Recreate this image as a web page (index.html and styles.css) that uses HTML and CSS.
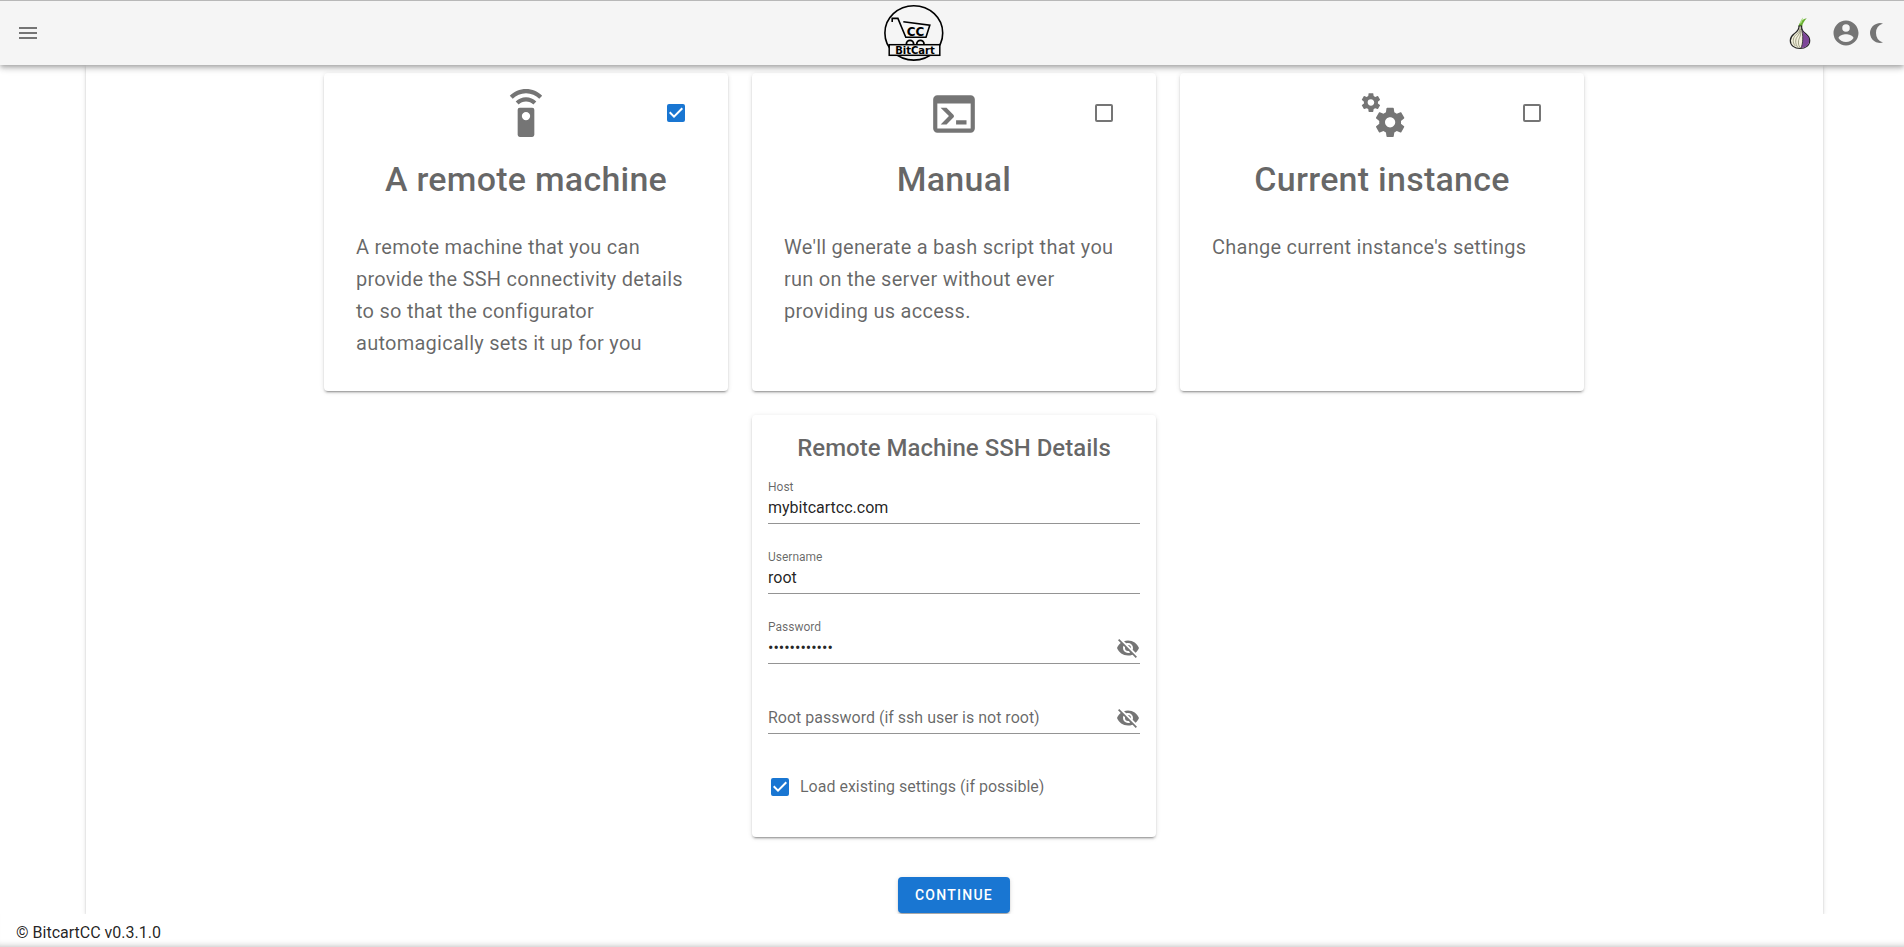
FILE: index.html
```html
<!DOCTYPE html>
<html lang="en">
<head>
<meta charset="utf-8">
<meta name="viewport" content="width=device-width, initial-scale=1">
<title>BitcartCC</title>
<link rel="stylesheet" href="styles.css">
</head>
<body>
<header class="app-bar">
  <button class="icon-button" type="button" aria-label="Menu">
    <svg class="icon" viewBox="0 0 24 24"><path d="M3,6H21V8H3V6M3,11H21V13H3V11M3,16H21V18H3V16Z"/></svg>
  </button>
  <a class="logo" href="#" aria-label="BitCart home">
    <svg width="60" height="60" viewBox="0 0 60 60" fill="none" stroke="#000">
      <ellipse cx="29.8" cy="29.9" rx="28.9" ry="27.2" stroke-width="1.6"/>
      <path d="M8.2 19V15.4H13.9L21.8 34.2H42L45.8 22.2L19.3 18.7" stroke-width="1.6"/>
      <circle cx="26" cy="41" r="3.6" stroke-width="1.8"/>
      <circle cx="36.4" cy="41" r="3.6" stroke-width="1.8"/>
      <rect x="5.2" y="41.7" width="50.6" height="10.6" fill="#f5f5f5" stroke-width="1.5"/>
      <text class="logo-cc" x="31.5" y="32.5" text-anchor="middle">CC</text>
      <text class="logo-name" x="31" y="50.7" text-anchor="middle">BitCart</text>
    </svg>
  </a>
  <nav class="actions">
    <a class="tor" href="#" aria-label="Tor">
      <svg width="24" height="34" viewBox="0 0 24 34">
        <path d="M10.5 10.5C11 7 13.5 3.5 18.8 2.2C16.5 4.5 14.8 7 14 10.5Z" fill="#68b030"/>
        <path d="M11.8 8C12 6 13 3.5 15 1.6C14.6 4 14 6 13.4 7Z" fill="#a6dc7c"/>
        <path d="M11 10C11.3 14 9 15.5 6 18C3.5 20 2.3 22 2.3 24.5C2.3 29.5 6.5 32.5 12 32.5C17.5 32.5 21.7 29.5 21.7 24.5C21.7 22 20.4 20 18 18C15 15.5 13.3 14 13.6 10Z" fill="#f2f0dc" stroke="#222" stroke-width="1.2"/>
        <path d="M13.5 12C14 15 15.5 16.3 18 18.4C20.3 20.3 21.2 22 21.2 24.5C21.2 29 17.5 32 13 32C15.2 28 15.5 19 13.5 12Z" fill="#7d4698"/>
        <path d="M12.2 11C12 17 9 17 6.5 20.5C4.5 23.5 5 28 7.5 30M12.4 13C12 19 8.5 20 7.8 24C7.3 27 8.5 30 10 31.5M12.8 15C13 21 10.5 22 10.4 26C10.3 29 11.5 31 12.3 32" fill="none" stroke="#8a8a70" stroke-width=".8"/>
        <path d="M13.4 12C15.3 19 15.3 28 12.8 32.3" fill="none" stroke="#333" stroke-width=".9"/>
      </svg>
    </a>
    <button class="icon-button" type="button" aria-label="Account">
      <svg class="icon icon-medium" viewBox="0 0 24 24"><path d="M12,19.2C9.5,19.2 7.29,17.92 6,16C6.03,14 10,12.9 12,12.9C14,12.9 17.97,14 18,16C16.71,17.92 14.5,19.2 12,19.2M12,5A3,3 0 0,1 15,8A3,3 0 0,1 12,11A3,3 0 0,1 9,8A3,3 0 0,1 12,5M12,2A10,10 0 0,0 2,12A10,10 0 0,0 12,22A10,10 0 0,0 22,12C22,6.47 17.5,2 12,2Z"/></svg>
    </button>
    <button class="icon-button theme-toggle" type="button" aria-label="Dark theme">
      <svg class="icon" viewBox="0 0 24 24"><path d="M2 12A10 10 0 0 0 15 21.54A10 10 0 0 1 15 2.46A10 10 0 0 0 2 12Z"/></svg>
    </button>
  </nav>
</header>

<main class="main">
  <form class="panel">
    <div class="options">
      <section class="card option">
        <input class="checkbox option-check" type="checkbox" aria-labelledby="opt-remote" checked>
        <svg class="icon icon-large" viewBox="0 0 24 24"><path d="M12,0C8.96,0 6.21,1.23 4.22,3.22L5.63,4.63C7.26,3 9.5,2 12,2C14.5,2 16.74,3 18.36,4.64L19.77,3.23C17.79,1.23 15.04,0 12,0M7.05,6.05L8.46,7.46C9.37,6.56 10.62,6 12,6C13.38,6 14.63,6.56 15.54,7.46L16.95,6.05C15.68,4.78 13.93,4 12,4C10.07,4 8.32,4.78 7.05,6.05M12,15A2,2 0 0,1 10,13A2,2 0 0,1 12,11A2,2 0 0,1 14,13A2,2 0 0,1 12,15M15,9H9A1,1 0 0,0 8,10V22A1,1 0 0,0 9,23H15A1,1 0 0,0 16,22V10A1,1 0 0,0 15,9Z"/></svg>
        <h2 class="option-title" id="opt-remote">A remote machine</h2>
        <p class="option-text">A remote machine that you can provide the SSH connectivity details to so that the configurator automagically sets it up for you</p>
      </section>
      <section class="card option">
        <input class="checkbox option-check" type="checkbox" aria-labelledby="opt-manual">
        <svg class="icon icon-large" viewBox="0 0 24 24"><path d="M20,19V7H4V19H20M20,3A2,2 0 0,1 22,5V19A2,2 0 0,1 20,21H4A2,2 0 0,1 2,19V5C2,3.89 2.9,3 4,3H20M13,17V15H18V17H13M9.58,13L5.57,9H8.4L11.7,12.3C12.09,12.69 12.09,13.33 11.7,13.72L8.42,17H5.59L9.58,13Z"/></svg>
        <h2 class="option-title" id="opt-manual">Manual</h2>
        <p class="option-text">We'll generate a bash script that you run on the server without ever providing us access.</p>
      </section>
      <section class="card option">
        <input class="checkbox option-check" type="checkbox" aria-labelledby="opt-current">
        <svg class="icon icon-large" viewBox="0 0 24 24"><path d="M15.9,18.45C17.25,18.45 18.35,17.35 18.35,16C18.35,14.65 17.25,13.55 15.9,13.55C14.54,13.55 13.45,14.65 13.45,16C13.45,17.35 14.54,18.45 15.9,18.45M21.1,16.68L22.58,17.84C22.71,17.95 22.75,18.13 22.66,18.29L21.26,20.71C21.17,20.86 21,20.92 20.83,20.86L19.09,20.16C18.73,20.44 18.33,20.67 17.91,20.85L17.64,22.7C17.62,22.87 17.47,23 17.3,23H14.5C14.32,23 14.18,22.87 14.15,22.7L13.89,20.85C13.46,20.67 13.07,20.44 12.71,20.16L10.96,20.86C10.81,20.92 10.62,20.86 10.54,20.71L9.14,18.29C9.05,18.13 9.09,17.95 9.22,17.84L10.7,16.68L10.65,16L10.7,15.31L9.22,14.16C9.09,14.05 9.05,13.86 9.14,13.71L10.54,11.29C10.62,11.13 10.81,11.07 10.96,11.13L12.71,11.84C13.07,11.56 13.46,11.32 13.89,11.15L14.15,9.29C14.18,9.13 14.32,9 14.5,9H17.3C17.47,9 17.62,9.13 17.64,9.29L17.91,11.15C18.33,11.32 18.73,11.56 19.09,11.84L20.83,11.13C21,11.07 21.17,11.13 21.26,11.29L22.66,13.71C22.75,13.86 22.71,14.05 22.58,14.16L21.1,15.31L21.15,16L21.1,16.68M6.69,8.07C7.56,8.07 8.26,7.37 8.26,6.5C8.26,5.63 7.56,4.92 6.69,4.92A1.58,1.58 0 0,0 5.11,6.5C5.11,7.37 5.82,8.07 6.69,8.07M10.03,6.94L11,7.68C11.07,7.75 11.09,7.87 11.03,7.97L10.13,9.53C10.08,9.63 9.96,9.67 9.86,9.63L8.74,9.18L8,9.62L7.81,10.81C7.79,10.92 7.7,11 7.59,11H5.79C5.67,11 5.58,10.92 5.56,10.81L5.4,9.62L4.64,9.18L3.52,9.63C3.41,9.67 3.3,9.63 3.24,9.53L2.34,7.97C2.28,7.87 2.31,7.75 2.39,7.68L3.34,6.94L3.31,6.5L3.34,6.06L2.39,5.32C2.31,5.25 2.28,5.13 2.34,5.03L3.24,3.47C3.3,3.37 3.41,3.32 3.52,3.37L4.63,3.82L5.4,3.38L5.56,2.19C5.58,2.08 5.67,2 5.79,2H7.59C7.7,2 7.79,2.08 7.81,2.19L8,3.38L8.74,3.82L9.86,3.37C9.96,3.32 10.08,3.37 10.13,3.47L11.03,5.03C11.09,5.13 11.07,5.25 11,5.32L10.03,6.06L10.06,6.5L10.03,6.94Z"/></svg>
        <h2 class="option-title" id="opt-current">Current instance</h2>
        <p class="option-text">Change current instance's settings</p>
      </section>
      <section class="card details">
        <h3 class="details-title">Remote Machine SSH Details</h3>
        <div class="fields">
          <div class="field">
            <label class="field-label" for="host">Host</label>
            <div class="field-row"><input class="field-input" id="host" type="text" value="mybitcartcc.com"></div>
          </div>
          <div class="field">
            <label class="field-label" for="username">Username</label>
            <div class="field-row"><input class="field-input" id="username" type="text" value="root"></div>
          </div>
          <div class="field">
            <label class="field-label" for="password">Password</label>
            <div class="field-row">
              <input class="field-input" id="password" type="password" value="mybitcartpwd">
              <button class="icon-button" type="button" aria-label="Show password">
                <svg class="icon" viewBox="0 0 24 24"><path d="M11.83,9L15,12.16C15,12.11 15,12.05 15,12A3,3 0 0,0 12,9C11.94,9 11.89,9 11.83,9M7.53,9.8L9.08,11.35C9.03,11.56 9,11.77 9,12A3,3 0 0,0 12,15C12.22,15 12.44,14.97 12.65,14.92L14.2,16.47C13.53,16.8 12.79,17 12,17A5,5 0 0,1 7,12C7,11.21 7.2,10.47 7.53,9.8M2,4.27L4.28,6.55L4.73,7C3.08,8.3 1.78,10 1,12C2.73,16.39 7,19.5 12,19.5C13.55,19.5 15.03,19.2 16.38,18.66L16.81,19.08L19.73,22L21,20.73L3.27,3M12,7A5,5 0 0,1 17,12C17,12.64 16.87,13.26 16.64,13.82L19.57,16.75C21.07,15.5 22.27,13.86 23,12C21.27,7.61 17,4.5 12,4.5C10.6,4.5 9.26,4.75 8,5.2L10.17,7.35C10.74,7.13 11.35,7 12,7Z"/></svg>
              </button>
            </div>
          </div>
          <div class="field">
            <div class="field-row">
              <input class="field-input" type="password" aria-label="Root password (if ssh user is not root)" placeholder="Root password (if ssh user is not root)">
              <button class="icon-button" type="button" aria-label="Show root password">
                <svg class="icon" viewBox="0 0 24 24"><path d="M11.83,9L15,12.16C15,12.11 15,12.05 15,12A3,3 0 0,0 12,9C11.94,9 11.89,9 11.83,9M7.53,9.8L9.08,11.35C9.03,11.56 9,11.77 9,12A3,3 0 0,0 12,15C12.22,15 12.44,14.97 12.65,14.92L14.2,16.47C13.53,16.8 12.79,17 12,17A5,5 0 0,1 7,12C7,11.21 7.2,10.47 7.53,9.8M2,4.27L4.28,6.55L4.73,7C3.08,8.3 1.78,10 1,12C2.73,16.39 7,19.5 12,19.5C13.55,19.5 15.03,19.2 16.38,18.66L16.81,19.08L19.73,22L21,20.73L3.27,3M12,7A5,5 0 0,1 17,12C17,12.64 16.87,13.26 16.64,13.82L19.57,16.75C21.07,15.5 22.27,13.86 23,12C21.27,7.61 17,4.5 12,4.5C10.6,4.5 9.26,4.75 8,5.2L10.17,7.35C10.74,7.13 11.35,7 12,7Z"/></svg>
              </button>
            </div>
          </div>
        </div>
        <label class="load-settings"><input class="checkbox" type="checkbox" checked>Load existing settings (if possible)</label>
      </section>
    </div>
    <button class="continue" type="submit">Continue</button>
  </form>
</main>

<footer class="footer">© BitcartCC v0.3.1.0</footer>
</body>
</html>
```
FILE: styles.css
```css
* {
  box-sizing: border-box;
}

body {
  margin: 0;
  min-height: 100vh;
  display: flex;
  flex-direction: column;
  background: #fff;
  color: rgba(0, 0, 0, .87);
  font: 16px/24px Roboto, "Liberation Sans", sans-serif;
}

.app-bar {
  position: sticky;
  top: 0;
  z-index: 2;
  display: flex;
  align-items: center;
  justify-content: space-between;
  height: 65px;
  padding: 0 12px 0 16px;
  background: #f5f5f5;
  border-top: 1px solid #b8b8b8;
  box-shadow: 0 2px 4px -1px rgba(0, 0, 0, .2), 0 4px 5px rgba(0, 0, 0, .14), 0 1px 10px rgba(0, 0, 0, .12);
}

.icon-button {
  display: flex;
  flex: none;
  padding: 0;
  border: 0;
  background: none;
  cursor: pointer;
}

.icon {
  display: block;
  width: 24px;
  height: 24px;
  fill: #757575;
}

.icon-medium {
  width: 30px;
  height: 30px;
}

.icon-large {
  width: 50px;
  height: 50px;
}

.logo,
.tor {
  display: flex;
}

.logo-cc,
.logo-name {
  fill: #000;
  stroke: none;
  font-family: "DejaVu Sans", Arial, sans-serif;
  font-weight: 700;
}

.logo-cc {
  font-size: 12px;
}

.logo-name {
  font-size: 10px;
}

.actions {
  display: flex;
  align-items: center;
}

.tor {
  margin-right: 19px;
}

.theme-toggle {
  margin-left: 7px;
}

.main {
  flex: 1;
  display: flex;
  padding: 0 81px 0 86px;
}

.panel {
  flex: 1;
  display: flex;
  flex-direction: column;
  align-items: center;
  gap: 40px;
  min-width: 0;
  padding: 8px 13px 1px 12px;
  box-shadow: 0 3px 1px -2px rgba(0, 0, 0, .2), 0 2px 2px rgba(0, 0, 0, .14), 0 1px 5px rgba(0, 0, 0, .12);
}

.options {
  display: grid;
  grid-template-columns: repeat(3, minmax(0, 1fr));
  gap: 24px;
  width: 100%;
  max-width: 1260px;
}

.card {
  border-radius: 4px;
  background: #fff;
  color: rgba(0, 0, 0, .6);
  box-shadow: 0 3px 1px -2px rgba(0, 0, 0, .2), 0 2px 2px rgba(0, 0, 0, .14), 0 1px 5px rgba(0, 0, 0, .12);
}

.option {
  position: relative;
  display: flex;
  flex-direction: column;
  align-items: center;
  padding: 16px 32px 32px;
}

.option-check {
  position: absolute;
  top: 28px;
  right: 40px;
}

.option-title {
  margin: 20px 0 32px;
  font-size: 34px;
  font-weight: 500;
  line-height: 40px;
  letter-spacing: .0073529412em;
}

.option-text {
  align-self: stretch;
  margin: 0;
  font-size: 20px;
  line-height: 32px;
  letter-spacing: .0125em;
}

.checkbox {
  appearance: none;
  flex: none;
  width: 18px;
  height: 18px;
  margin: 3px;
  border: 2px solid #757575;
  border-radius: 2px;
  cursor: pointer;
}

.checkbox:checked {
  border-color: #1976d2;
  background: #1976d2 url("data:image/svg+xml,%3Csvg xmlns='http://www.w3.org/2000/svg' viewBox='3 3 18 18'%3E%3Cpath fill='%23fff' d='M10,17L5,12L6.41,10.58L10,14.17L17.59,6.58L19,8Z'/%3E%3C/svg%3E") center / 18px 18px no-repeat border-box;
}

.details {
  grid-column: 2;
  padding: 17px 16px 37px;
}

.details-title {
  margin: 0 0 16px;
  font-size: 24px;
  font-weight: 500;
  line-height: 32px;
  text-align: center;
}

.fields {
  display: flex;
  flex-direction: column;
  gap: 26px;
}

.field {
  display: flex;
  flex-direction: column;
  justify-content: flex-end;
  min-height: 44px;
}

.field-label {
  font-size: 12px;
  line-height: 14px;
}

.field-row {
  display: flex;
  align-items: center;
  height: 30px;
  padding-bottom: 2px;
  border-bottom: 1px solid #949494;
}

.field-input {
  flex: 1;
  min-width: 0;
  padding: 0;
  border: 0;
  outline: 0;
  background: none;
  color: rgba(0, 0, 0, .87);
  font: inherit;
}

.field-input::placeholder {
  color: rgba(0, 0, 0, .6);
  opacity: 1;
}

.load-settings {
  display: flex;
  align-items: center;
  gap: 8px;
  margin-top: 41px;
}

.load-settings .checkbox {
  margin-right: 0;
}

.continue {
  height: 36px;
  padding: 0 17px;
  border: 0;
  border-radius: 4px;
  background: #1976d2;
  color: #fff;
  font: 500 14px/20px Roboto, "Liberation Sans", sans-serif;
  letter-spacing: .0892857143em;
  text-transform: uppercase;
  cursor: pointer;
  box-shadow: 0 3px 1px -2px rgba(0, 0, 0, .2), 0 2px 2px rgba(0, 0, 0, .14), 0 1px 5px rgba(0, 0, 0, .12);
}

.load-settings {
  gap: 11px;
}

.details {
  padding-bottom: 38px;
}

.footer {
  position: relative;
  z-index: 1;
  padding: 7px 16px 2px;
  background: #fff;
  box-shadow: inset 0 -7px 7px -7px rgba(0, 0, 0, .3);
}
```
